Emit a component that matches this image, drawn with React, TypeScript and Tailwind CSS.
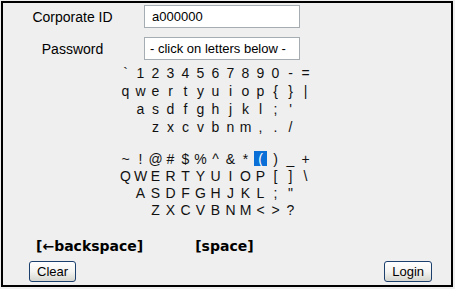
import React from "react";

const lower: { chars: string[]; offset: number }[] = [
  { chars: ["`", "1", "2", "3", "4", "5", "6", "7", "8", "9", "0", "-", "="], offset: 0 },
  { chars: ["q", "w", "e", "r", "t", "y", "u", "i", "o", "p", "{", "}", "|"], offset: 0 },
  { chars: ["a", "s", "d", "f", "g", "h", "j", "k", "l", ";", "'"], offset: 1 },
  { chars: ["z", "x", "c", "v", "b", "n", "m", ",", ".", "/"], offset: 2 },
];

const upper: { chars: string[]; offset: number }[] = [
  { chars: ["~", "!", "@", "#", "$", "%", "^", "&", "*", "(", ")", "_", "+"], offset: 0 },
  { chars: ["Q", "W", "E", "R", "T", "Y", "U", "I", "O", "P", "[", "]", "\\"], offset: 0 },
  { chars: ["A", "S", "D", "F", "G", "H", "J", "K", "L", ";", "\""], offset: 1 },
  { chars: ["Z", "X", "C", "V", "B", "N", "M", "<", ">", "?"], offset: 2 },
];

function KeyRow({
  chars,
  offset,
  tall,
  selected,
}: {
  chars: string[];
  offset: number;
  tall: boolean;
  selected?: string;
}) {
  return (
    <div className={`flex items-center gap-[2px] ${tall ? "h-[18px]" : "h-[17px]"}`}>
      {offset >= 1 && <span className="w-[13px] shrink-0" />}
      {offset >= 2 && <span className="w-[13px] shrink-0" />}
      {chars.map((c, i) => (
        <span
          key={i}
          className={`flex h-[15px] w-[13px] shrink-0 cursor-pointer items-center justify-center leading-none ${
            selected === c ? "bg-[#0a6fd6] text-white" : "text-[#111]"
          }`}
        >
          {c}
        </span>
      ))}
    </div>
  );
}

function XPButton({ label }: { label: string }) {
  return (
    <button className="flex h-[21px] items-center justify-center rounded-[3px] border border-[#1c3f6e] bg-gradient-to-b from-white via-[#f4f4f2] to-[#d6d6d0] px-[7px] text-[13px] leading-none text-black">
      {label}
    </button>
  );
}

export default function App() {
  return (
    <div
      className="h-[289px] w-[455px] bg-[#efefef] pl-px pt-px"
      style={{ fontFamily: '"Liberation Sans", Arial, sans-serif' }}
    >
      <div className="flex h-[286px] w-[452px] flex-col border-2 border-black bg-[#efefef]">
        {/* Corporate ID */}
        <div className="mt-[2px] flex h-[23px] items-center">
          <div className="w-[139px] text-center text-[14px] leading-none text-black">Corporate ID</div>
          <div className="ml-[2px] flex h-[23px] w-[156px] items-center border border-[#a5acb2] bg-white pl-[7px] text-[13px] text-black">
            a000000
          </div>
        </div>
        {/* Password */}
        <div className="mt-[9px] flex h-[23px] items-center">
          <div className="w-[139px] text-center text-[14px] leading-none text-black">Password</div>
          <div className="ml-[2px] flex h-[23px] w-[156px] items-center border border-[#a5acb2] bg-white pl-[5px] text-[13px] text-black">
            - click on letters below -
          </div>
        </div>

        {/* Keyboard */}
        <div className="mt-[4px] flex flex-col pl-[116px] text-[14px]">
          {lower.map((r, i) => (
            <KeyRow key={i} chars={r.chars} offset={r.offset} tall />
          ))}
          <div className="h-[14px]" />
          {upper.map((r, i) => (
            <KeyRow key={i} chars={r.chars} offset={r.offset} tall={false} selected={i === 0 ? "(" : undefined} />
          ))}
        </div>

        {/* backspace / space */}
        <div
          className="mt-[19px] flex h-[17px] items-center pl-[33px] text-[14px] font-bold leading-none text-black"
          style={{ fontFamily: '"DejaVu Sans", Verdana, sans-serif' }}
        >
          <span className="cursor-pointer">[←backspace]</span>
          <span className="ml-[52px] cursor-pointer">[space]</span>
        </div>

        {/* Buttons */}
        <div className="mt-[7px] flex items-center justify-between pl-[26px] pr-[19px]">
          <XPButton label="Clear" />
          <XPButton label="Login" />
        </div>
      </div>
    </div>
  );
}
